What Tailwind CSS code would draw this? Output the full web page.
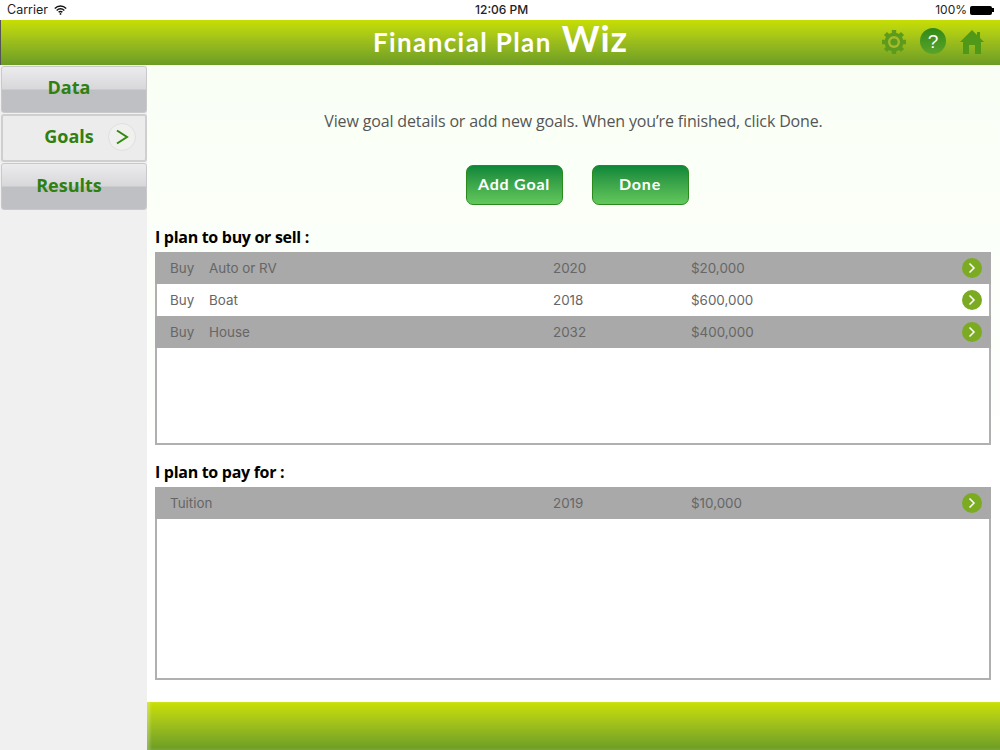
<!DOCTYPE html>
<html>
<head>
<meta charset="utf-8">
<script src="https://cdn.jsdelivr.net/npm/@tailwindcss/browser@4"></script>
</head>
<body class="w-[1000px] h-[750px] overflow-hidden bg-white font-['Liberation_Sans',sans-serif]">
<div class="flex h-5 items-center justify-between bg-white pl-[7px] pr-[6px] text-[13px] text-[#222] relative">
  <div class="flex items-center gap-[6px]">
    <span class="font-['Inter',sans-serif] text-[12.5px]">Carrier</span>
    <svg width="13" height="10" viewBox="0 0 13 10" fill="none" stroke="#111" stroke-width="1.4" class="mb-[1px]"><path d="M.8 3.4a8 8 0 0 1 11.4 0M2.7 5.4a5.3 5.3 0 0 1 7.6 0M4.6 7.3a2.6 2.6 0 0 1 3.800 0"/><circle cx="6.5" cy="8.9" r=".9" fill="#111" stroke="none"/></svg>
  </div>
  <span class="absolute left-[475px] font-['Inter',sans-serif] text-[12px] font-medium">12:06 PM</span>
  <div class="flex items-center gap-[3px]">
    <span class="font-['Inter',sans-serif] text-[12px]">100%</span>
    <div class="flex items-center"><div class="w-[22px] h-[9px] bg-black rounded-[2px]"></div><div class="w-[2px] h-[4px] bg-black"></div></div>
  </div>
</div>
<header class="relative flex h-[45px] items-center justify-center border-l border-[#555] bg-gradient-to-b from-[#c8de00] to-[#6c9c24]">
  <div class="flex items-baseline text-white font-['Lato',sans-serif] font-bold tracking-[1.4px] text-[26px] leading-none pb-[9px]">
    <span>Financial Plan</span><span class="ml-[10px] text-[36px] tracking-[1px]">Wiz</span>
  </div>
  <div class="absolute left-[880px] top-[9px] flex items-center gap-[13px]">
    <svg width="26" height="26" viewBox="0 0 26 26"><g fill="#5d9b1c"><circle cx="13" cy="13" r="9.5"/><g stroke="#5d9b1c" stroke-width="4.4"><path d="M13 1v24M1 13h24M4.500 4.500l17 17M21.500 4.500l-17 17"/></g></g><circle cx="13" cy="13" r="6" fill="#a4bb2c"/><circle cx="13" cy="13" r="3.6" fill="#5d9b1c"/></svg>
    <div class="-mt-[2px] flex h-[26px] w-[26px] items-center justify-center rounded-full bg-gradient-to-b from-[#2f8a17] to-[#5aa32a] text-[19px] leading-none text-white">?</div>
    <svg width="26" height="26" viewBox="0 0 26 26"><path d="M13 1 L18 6 L18 3 L21 3 L21 9 L25 13 L22 13 L22 25 L16 25 L16 16 L10 16 L10 25 L4 25 L4 13 L1 13 Z" fill="#4f9818"/></svg>
  </div>
</header>
<div class="flex h-[685px]">
  <aside class="flex w-[147px] flex-col gap-[1px] bg-[#f0f0f0] pl-[1px] pt-[1px] font-['Open_Sans',sans-serif] text-[18px] font-bold text-[#2f8010]">
    <div class="flex h-[47px] items-center justify-center rounded-[3px] border border-[#c9c9cb] bg-[linear-gradient(#ececee_0%,#d8d8da_48%,#bfc0c3_52%,#bfc0c3_100%)] pr-[10px] pb-[4px]">Data</div>
    <div class="relative flex h-[48px] items-center justify-center rounded-[3px] border-2 border-[#cfcfd0] bg-[#ececec] pr-[10px] pb-[4px]">
      Goals
      <div class="absolute left-[105px] top-[7px] flex h-[28px] w-[28px] items-center justify-center rounded-full border border-[#e0e0e0] bg-[#f0f0ee]">
        <svg width="14" height="16" viewBox="0 0 14 16" fill="none" stroke="#2f8a10" stroke-width="2"><path d="M2 1.500 12 8 2 14.500"/></svg>
      </div>
    </div>
    <div class="flex h-[47px] items-center justify-center rounded-[3px] border border-[#c9c9cb] bg-[linear-gradient(#ececee_0%,#d8d8da_48%,#bfc0c3_52%,#bfc0c3_100%)] pr-[10px] pb-[3px]">Results</div>
  </aside>
  <main class="flex w-[853px] flex-col bg-[linear-gradient(#f9fff5_0%,#ffffff_60%)]">
    <p class="mt-[45px] text-center font-['Open_Sans',sans-serif] text-[16px] leading-[22px] tracking-[-0.15px] text-[#555]">View goal details or add new goals. When you’re finished, click Done.</p>
    <div class="mt-[33px] flex justify-center gap-[29px] pl-[7px] font-['Lato',sans-serif] text-[16px] font-bold tracking-[0.8px] text-white">
      <div class="flex h-[40px] w-[97px] items-center justify-center rounded-[7px] border-[1.5px] border-[#2b8a1e] bg-gradient-to-b from-[#0b873a] to-[#62c85c] pb-[2px]">Add Goal</div>
      <div class="flex h-[40px] w-[97px] items-center justify-center rounded-[7px] border-[1.5px] border-[#2b8a1e] bg-gradient-to-b from-[#0b873a] to-[#62c85c] pb-[2px]">Done</div>
    </div>
    <h2 class="mt-[21px] ml-[8px] font-['Open_Sans',sans-serif] text-[16px] font-bold leading-[22px] tracking-[-0.3px] text-black">I plan to buy or sell :</h2>
    <div class="ml-[8px] mt-[4px] h-[193px] w-[836px] border-2 border-[#b0b0b0] bg-white font-['Inter',sans-serif] text-[13.4px] text-[#666]">
      <div class="-mx-[2px] -mt-[2px] flex h-[32px] items-center bg-[#a9a9a9] pl-[15px]">
        <span class="w-[39px]">Buy</span><span class="w-[344px]">Auto or RV</span><span class="w-[138px]">2020</span><span class="w-[271px]">$20,000</span>
        <svg width="20" height="20" viewBox="0 0 20 20"><circle cx="10" cy="10" r="10" fill="#7aab21"/><path d="M7.500 5.500 12 10l-4.500 4.500" fill="none" stroke="#fff" stroke-width="1.500"/></svg>
      </div>
      <div class="-mx-[2px] flex h-[32px] items-center border-x-2 border-[#b0b0b0] bg-white pl-[13px]">
        <span class="w-[39px]">Buy</span><span class="w-[344px]">Boat</span><span class="w-[138px]">2018</span><span class="w-[271px]">$600,000</span>
        <svg width="20" height="20" viewBox="0 0 20 20"><circle cx="10" cy="10" r="10" fill="#7aab21"/><path d="M7.500 5.500 12 10l-4.500 4.500" fill="none" stroke="#fff" stroke-width="1.500"/></svg>
      </div>
      <div class="-mx-[2px] flex h-[32px] items-center bg-[#a9a9a9] pl-[15px]">
        <span class="w-[39px]">Buy</span><span class="w-[344px]">House</span><span class="w-[138px]">2032</span><span class="w-[271px]">$400,000</span>
        <svg width="20" height="20" viewBox="0 0 20 20"><circle cx="10" cy="10" r="10" fill="#7aab21"/><path d="M7.500 5.500 12 10l-4.500 4.500" fill="none" stroke="#fff" stroke-width="1.500"/></svg>
      </div>
    </div>
    <h2 class="mt-[16px] ml-[8px] font-['Open_Sans',sans-serif] text-[16px] font-bold leading-[22px] tracking-[-0.3px] text-black">I plan to pay for :</h2>
    <div class="ml-[8px] mt-[4px] h-[193px] w-[836px] border-2 border-[#b0b0b0] bg-white font-['Inter',sans-serif] text-[13.4px] text-[#666]">
      <div class="-mx-[2px] -mt-[2px] flex h-[32px] items-center bg-[#a9a9a9] pl-[15px]">
        <span class="w-[383px]">Tuition</span><span class="w-[138px]">2019</span><span class="w-[271px]">$10,000</span>
        <svg width="20" height="20" viewBox="0 0 20 20"><circle cx="10" cy="10" r="10" fill="#7aab21"/><path d="M7.500 5.500 12 10l-4.500 4.500" fill="none" stroke="#fff" stroke-width="1.500"/></svg>
      </div>
    </div>
    <div class="mt-[22px] h-[48px] bg-gradient-to-b from-[#cbe000] to-[#6c9c24] shadow-[inset_3px_0_3px_rgba(255,255,255,0.25)]"></div>
  </main>
</div>
</body>
</html>
